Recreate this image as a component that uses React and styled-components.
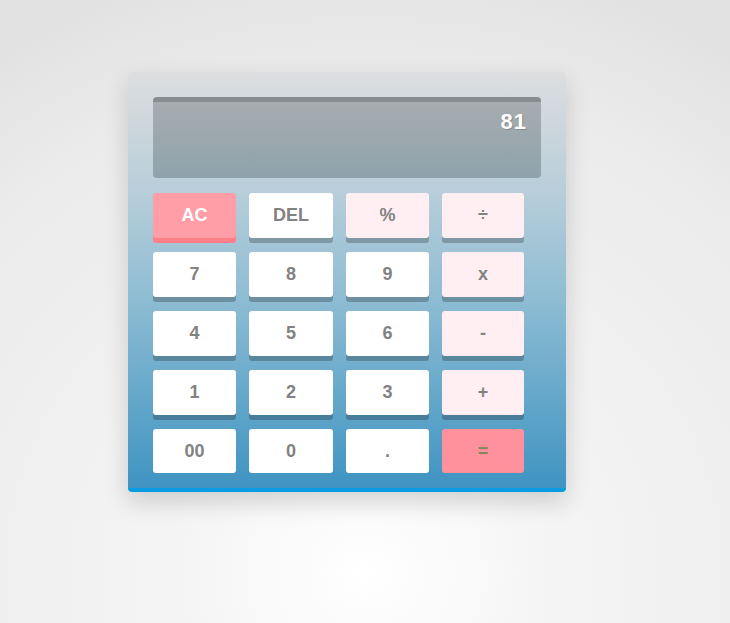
import styled, { createGlobalStyle } from 'styled-components'

const GlobalStyle = createGlobalStyle`
  html, body {
    margin: 0;
    height: 100%;
  }
  body {
    font-family: 'Liberation Sans', Arial, sans-serif;
    background: radial-gradient(ellipse 90% 100% at 50% 92%, #ffffff 0%, #f4f4f4 30%, #ebebeb 80%, #e2e2e2 100%);
  }
`

const Page = styled.div`
  min-height: 623px;
  box-sizing: border-box;
  padding: 72px 0 0 128px;
`

const Calculator = styled.div`
  width: 438px;
  box-sizing: border-box;
  padding: 25px 42px 15px 25px;
  border-radius: 4px;
  border-bottom: 4px solid #0b9be0;
  background: linear-gradient(to bottom, #dddee0 0%, #b6cdd9 30%, #8dbcd3 55%, #3f94c2 100%);
  box-shadow: 0 10px 24px rgba(0, 0, 0, 0.16);
`

const Display = styled.div`
  width: 388px;
  height: 81px;
  box-sizing: border-box;
  border-top: 5px solid #898c8f;
  border-radius: 4px;
  padding: 7px 14px 0 0;
  background: linear-gradient(to bottom, #a7acaf 0%, #8fa3ac 100%);
  text-align: right;
  color: #ffffff;
  font-size: 22px;
  font-weight: bold;
  letter-spacing: 1px;
  text-shadow: 1px 1px 1px rgba(0, 0, 0, 0.18);
`

const Keys = styled.div`
  margin-top: 15px;
  display: grid;
  grid-template-columns: 83px 84px 83px 82px;
  grid-template-rows: repeat(4, 45px) 44px;
  column-gap: 13px;
  row-gap: 14px;
`

const faces = {
  number: { bg: '#ffffff', fg: '#828282', shadow: 'rgba(0, 0, 0, 0.23)' },
  operator: { bg: '#ffeff3', fg: '#828282', shadow: 'rgba(0, 0, 0, 0.23)' },
  clear: { bg: '#ff9ea6', fg: '#ffffff', shadow: '#ff7f89' },
  equals: { bg: '#ff919c', fg: '#87875a', shadow: 'transparent' },
}

const Key = styled.button`
  border: none;
  margin: 0;
  padding: 0;
  border-radius: 3px;
  font-family: 'Liberation Sans', Arial, sans-serif;
  font-size: 18px;
  font-weight: bold;
  cursor: pointer;
  background: ${({ $kind }) => faces[$kind].bg};
  color: ${({ $kind }) => faces[$kind].fg};
  box-shadow: ${({ $kind, $flat }) =>
    $flat ? 'none' : `0 5px 0 ${faces[$kind].shadow}`};
`

const rows = [
  [['AC', 'clear'], ['DEL', 'number'], ['%', 'operator'], ['÷', 'operator']],
  [['7', 'number'], ['8', 'number'], ['9', 'number'], ['x', 'operator']],
  [['4', 'number'], ['5', 'number'], ['6', 'number'], ['-', 'operator']],
  [['1', 'number'], ['2', 'number'], ['3', 'number'], ['+', 'operator']],
  [['00', 'number'], ['0', 'number'], ['.', 'number'], ['=', 'equals']],
]

function App() {
  return (
    <>
      <GlobalStyle />
      <Page>
        <Calculator>
          <Display>81</Display>
          <Keys>
            {rows.map((row, r) =>
              row.map(([label, kind]) => (
                <Key key={label} $kind={kind} $flat={r === rows.length - 1}>
                  {label}
                </Key>
              ))
            )}
          </Keys>
        </Calculator>
      </Page>
    </>
  )
}

export default App
